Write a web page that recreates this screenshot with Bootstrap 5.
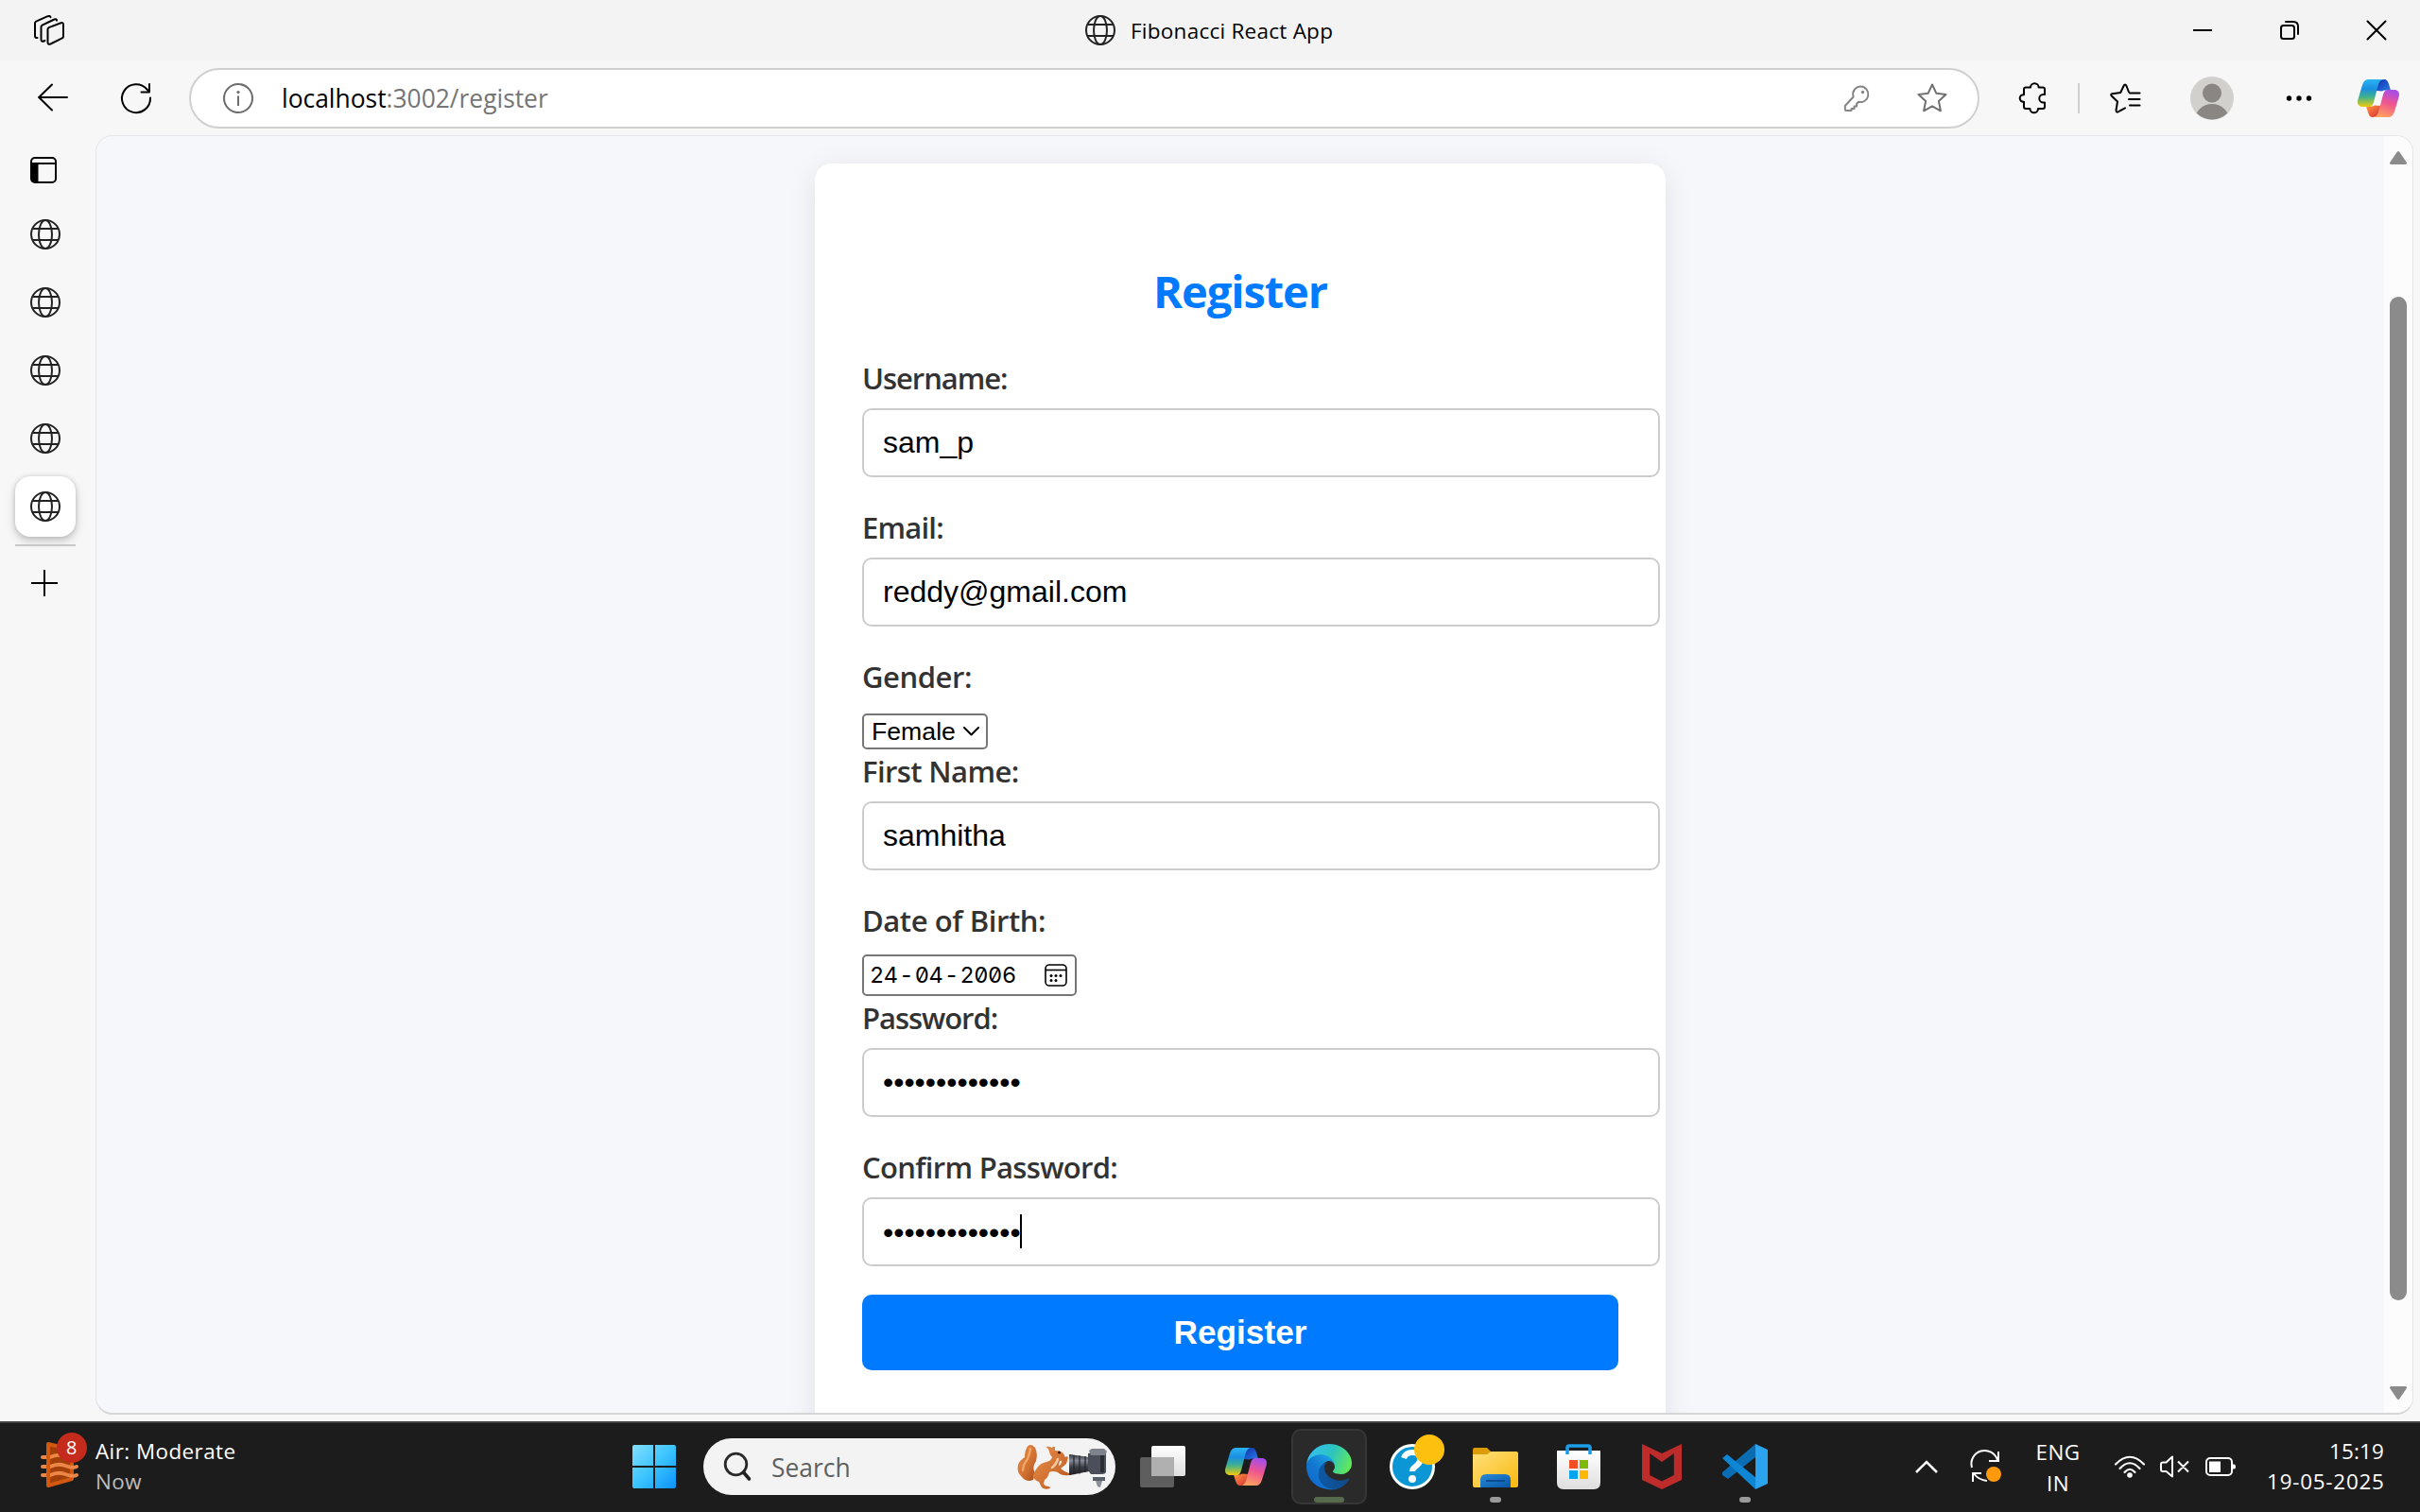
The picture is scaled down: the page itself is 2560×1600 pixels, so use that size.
<!DOCTYPE html>
<html lang="en">
<head>
<meta charset="utf-8">
<title>Fibonacci React App</title>
<link href="https://cdn.jsdelivr.net/npm/bootstrap@5.3.0/dist/css/bootstrap.min.css" rel="stylesheet">
<style>
body{width:2560px;height:1600px;overflow:hidden;background:#f7f7f7;font-family:"Open Sans","Noto Sans",sans-serif;color:#000}
svg{display:block;flex:none;overflow:visible}
.ln{fill:none;stroke:currentColor;stroke-width:2;stroke-linecap:round;stroke-linejoin:round}
.titlebar{height:64px;background:#f3f3f3;flex:none}
.title-text{font-size:22.5px;line-height:32px;padding-top:2px;margin-left:16px;letter-spacing:.25px;width:220px;white-space:nowrap}
.toolbar{height:79px;padding:1px 22px 0 40px;flex:none}
.address{width:1894px;height:64px;border:2px solid #d0d0d0;border-radius:32px;background:#fff;margin-left:40px;padding:0 32px 0 34px;color:#6b6b6b}
.url{font-size:26.4px;line-height:36px;margin-left:30px;white-space:nowrap}
.url b{font-weight:400;color:#000}
.url span{color:#757575}
.rail{width:101px;flex:none;padding:23px 0 0 16px;color:#222}
.tab-active{width:64px;height:64px;border-radius:16px;background:#fff;box-shadow:0 4px 10px rgba(0,0,0,.22),0 0 4px rgba(0,0,0,.12);margin-top:24px}
.rail-rule{width:64px;height:2px;background:#c8c8c8;margin-top:8px}
.viewport{width:2452px;height:1354px;border:2px solid #e4e5e9;border-top-width:1px;border-left-width:1px;border-right-width:1px;border-bottom-color:#d6d6d6;border-radius:18px;background:#f5f7fb;overflow:hidden;flex:none}
.stage{width:2420px;flex:none;padding:29px 0 0 760px}
.form-card{width:900px;height:1400px;background:#fff;border-radius:18px;box-shadow:0 6px 32px rgba(0,0,30,.085);padding:103px 50px 0}
.form-card h2{font-size:47px;line-height:64px;font-weight:700;color:#007bff;margin:0 0 39px;letter-spacing:-1.1px}
.form-card label{display:block;font-size:31px;line-height:43px;font-weight:600;color:#333;margin-bottom:10px;white-space:nowrap;letter-spacing:-.8px}
.form-card label:nth-of-type(1),.form-card label:nth-of-type(6){letter-spacing:-1.05px}
.form-card label:nth-of-type(3){letter-spacing:-.45px}
.form-card label:nth-of-type(4){letter-spacing:-.6px}
.form-card label:nth-of-type(5){letter-spacing:-.42px}
.form-card label:nth-of-type(7){letter-spacing:-.68px}
.entry{width:844px;height:73px;border:2px solid #ccc;border-radius:10px;padding:0 20px;font:32px/68px "Liberation Sans",Arial,sans-serif;color:#000;margin-bottom:32px;white-space:nowrap}
.pick{width:133px;height:38px;border:2px solid #767676;border-radius:5px;font:26.67px/34px "Liberation Sans",Arial,sans-serif;padding:0 7px 0 8px;margin:17px 0 2px}
.dob{width:227px;height:44px;border:2px solid #767676;border-radius:5px;padding:0 8px 0 6px;margin:14px 0 2px;font:23.5px/42px Inter,sans-serif;font-feature-settings:"tnum","zero";letter-spacing:-.4px}
.dob i{font-style:normal;display:inline-block;width:18px;text-align:center}
.caret{width:2px;height:36px;background:#000;margin:-1px 0 0 -1px}
.submit{width:800px;height:80px;border:0;border-radius:10px;background:#007bff;color:#fff;font:700 35.2px/80px "Liberation Sans",Arial,sans-serif;padding:0;margin-top:-2px}
.gutter{width:30px;background:#fcfcfc;flex:none;padding:16px 0 14px}
.thumb{width:18px;height:1062px;border-radius:9px;background:#8b8b8b;margin-top:140px}
.taskbar{height:96px;border-top:2px solid #404040;background:#1c1c1c;color:#fff;padding-bottom:2px;flex:none;font-size:22.4px;line-height:32.4px}
.weather{width:669px;padding-left:43px;letter-spacing:.45px}
.lang{width:50px;margin-left:35px;padding-top:3px;letter-spacing:.4px}
.clock{width:157px;letter-spacing:.2px}
.clock .day{letter-spacing:.78px;margin-right:-.7px}
.count{position:absolute;left:17px;top:-10px;width:32px;height:32px;border-radius:50%;background:#c42b1c;font-size:20px;line-height:32px;text-align:center}
.find{width:436px;height:60px;border-radius:30px;background:#f3f3f3;margin-left:29px;padding:0 7px 0 22px}
.find span{font-size:26.4px;line-height:40px;color:#5f5f5f;margin-left:22px;padding-top:1px}
.tile{width:80px;height:80px;border:2px solid #363636;border-radius:10px;background:#2a2a2a;margin-left:26px}
.pip{position:absolute;left:50%;bottom:-14px;width:12px;height:6px;margin-left:-6px;border-radius:3px;background:#9a9a9a}
.pip.on{width:32px;margin-left:-16px;background:#566b4b}
</style>
</head>
<body class="d-flex flex-column">
<svg width="0" height="0" style="position:absolute">
<defs>
<symbol id="globe" viewBox="0 0 32 32"><g fill="none" stroke="#222" stroke-width="2"><circle cx="16" cy="16" r="15"/><ellipse cx="16" cy="16" rx="7" ry="15"/><path d="M2.500 10h27M2.500 22h27"/></g></symbol>
<linearGradient id="ca" x1="0" y1="0" x2="0" y2="1"><stop offset="0" stop-color="#2bb3f3"/><stop offset=".35" stop-color="#1a8fe0"/><stop offset=".65" stop-color="#43b28a"/><stop offset="1" stop-color="#f0cb0a"/></linearGradient>
<linearGradient id="cb" x1="0" y1="0" x2="1" y2="1"><stop offset="0" stop-color="#0f2fa8"/><stop offset="1" stop-color="#2a7de8"/></linearGradient>
<linearGradient id="cc" x1=".6" y1="0" x2=".3" y2="1"><stop offset="0" stop-color="#a64ee8"/><stop offset=".45" stop-color="#f0558f"/><stop offset="1" stop-color="#ffa65c"/></linearGradient>
<linearGradient id="cd" x1="0" y1="0" x2="1" y2="1"><stop offset="0" stop-color="#ff9a3c"/><stop offset="1" stop-color="#d92c3a"/></linearGradient>
<symbol id="copilot" viewBox="0 0 44 40"><path d="M19.500 12L22 4Q23.500 0 28 0c3 0 4 2 5 5l2 6.500H29q-2 0-3 1z" fill="url(#cb)"/><path d="M24.500 28L22 36Q20.500 40 16 40c-3 0-4-2-5-5l-2-6.500H15q2 0 3-1z" fill="url(#cd)"/><path d="M12 0h16c-3 0-5 2-6 5l-5 19c-1 3-2 5-5 5H6c-5 0-7-3-5.500-8L5 6C6.500 2 8 0 12 0z" fill="url(#ca)"/><path d="M32 40H16c3 0 5-2 6-5l5-19c1-3 2-5 5-5h6c5 0 7 3 5.500 8L39 34c-1.500 4-3 6-7 6z" fill="url(#cc)"/></symbol>
<linearGradient id="wn" x1="0" y1="0" x2="1" y2="1"><stop offset="0" stop-color="#83deff"/><stop offset=".5" stop-color="#3cc4ff"/><stop offset="1" stop-color="#0a93fb"/></linearGradient>
<linearGradient id="e1" x1="0" y1=".5" x2="1" y2=".5"><stop offset="0" stop-color="#0c59a4"/><stop offset="1" stop-color="#114a8b"/></linearGradient>
<linearGradient id="e2" x1=".8" y1=".2" x2=".2" y2=".9"><stop offset="0" stop-color="#1b9de2"/><stop offset=".5" stop-color="#1477cf"/><stop offset="1" stop-color="#0e6cd0"/></linearGradient>
<linearGradient id="e3" x1="0" y1=".4" x2="1" y2=".7"><stop offset="0" stop-color="#35c1f1"/><stop offset=".5" stop-color="#2cc4bd"/><stop offset="1" stop-color="#66eb54"/></linearGradient>
<linearGradient id="fo" x1="0" y1="0" x2="1" y2="1"><stop offset="0" stop-color="#ffe17a"/><stop offset="1" stop-color="#f9b710"/></linearGradient>
<linearGradient id="fb" x1="0" y1="0" x2="1" y2="1"><stop offset="0" stop-color="#2b8ad8"/><stop offset="1" stop-color="#0657a6"/></linearGradient>
<linearGradient id="fur" x1="0" y1="0" x2="1" y2="1"><stop offset="0" stop-color="#e9924c"/><stop offset=".6" stop-color="#cf6f30"/><stop offset="1" stop-color="#a64c1c"/></linearGradient>
<linearGradient id="lens" x1="0" y1="0" x2="0" y2="1"><stop offset="0" stop-color="#343840"/><stop offset=".3" stop-color="#858b96"/><stop offset=".6" stop-color="#3d4048"/><stop offset="1" stop-color="#1d1f24"/></linearGradient>
</defs>
</svg>

<!-- Window title bar -->
<header class="titlebar d-flex align-items-center">
  <svg width="32" height="32" viewBox="0 0 32 32" style="margin-left:36px"><g class="ln"><path d="M14.500 15q0-1.300 1.200-1.900L28.500 8.300Q31 7.500 31 10v12.500q0 1.300-1.200 1.900L17.500 30.500Q14.500 31.500 14.500 29z"/><path d="M11.500 27Q7.500 29 7.500 26V12.500q0-1.300 1.200-1.900L21.500 4.500q2.500-.8 2.500 1.300"/><path d="M3.500 24Q1 24.300 1 22V8.500Q1 7.200 2.200 6.600L14.500 1.200Q17 .4 17.500 2.200"/></g></svg>
  <svg width="32" height="32" style="margin-left:1080px"><use href="#globe"/></svg>
  <div class="title-text">Fibonacci React App</div>
  <div class="d-flex align-items-center ms-auto" style="padding-right:36px;gap:72px">
    <svg width="20" height="20"><path d="M0 10h20" stroke="#000" stroke-width="2"/></svg>
    <svg width="20" height="20"><g class="ln"><rect x="1" y="5" width="14" height="14" rx="2.500"/><path d="M6 1h8q5 0 5 5v8"/></g></svg>
    <svg width="20" height="20"><path class="ln" d="M.5.500l19 19M19.500.500l-19 19"/></svg>
  </div>
</header>

<!-- Address toolbar -->
<nav class="toolbar d-flex align-items-center">
  <svg width="32" height="32"><path class="ln" d="M31 15H1M15 1.500L1.200 15L15 28.500"/></svg>
  <svg width="32" height="32" style="margin-left:56px"><path class="ln" d="M31 15.500A15 15 0 1 1 27.500 6.500L30 9M30 1v8.500h-8.500"/></svg>
  <div class="address d-flex align-items-center">
    <svg width="32" height="32"><circle cx="16" cy="16" r="15" class="ln"/><path d="M16 13.500v10.500" stroke="#6b6b6b" stroke-width="2"/><circle cx="16" cy="9.500" r="1.600" fill="#6b6b6b"/></svg>
    <div class="url"><span><b>localhost</b>:3002/register</span></div>
    <svg class="ms-auto" width="28" height="28" viewBox="0 0 28 28"><path d="M17.500 1.500a8.300 8.300 0 1 1-2.600 16.300L13 20v2.500h-2.500V25H7.500v2H2Q.8 27 .8 25.500V22L9.600 12.500A8.300 8.300 0 0 1 17.500 1.500z" fill="none" stroke="#858585" stroke-width="2" stroke-linejoin="round"/><circle cx="19.500" cy="7.500" r="1.700" fill="#858585"/></svg>
    <svg width="32" height="32" style="margin-left:49px"><path d="M16 1.500l4.300 9.200 10.200 1.300-7.600 7 2 10.300L16 24.300l-8.900 5 2-10.300-7.600-7 10.200-1.300z" fill="none" stroke="#707070" stroke-width="2" stroke-linejoin="round"/></svg>
  </div>
  <svg width="32" height="32" style="margin-left:42px"><path class="ln" d="M5 6.500q0-2 2-2h5a4.300 4.300 0 0 1 8.600 0H25q2 0 2 2V12h-1.500a4.200 4.200 0 0 0 0 8.500H27V25q0 2-2 2h-5a4.300 4.300 0 0 1-8.600 0H7q-2 0-2-2v-5.200H4.500a3.800 3.800 0 0 1 0-7.600H5z"/></svg>
  <div style="width:2px;height:32px;background:#d0d0d0;margin-left:30px"></div>
  <svg width="32" height="32" style="margin-left:32px"><g class="ln"><path d="M20 9.500L17.500 3q-1.500-3-3 0L11.200 10 2.500 11.200q-2.300.5-.7 2.300L8 19.500 6.500 28.500q0 3 2.500 1.700L16 26.300"/><path d="M21 10.500h10.500M20 17h11.500M21 23.500h10.500"/></g></svg>
  <svg width="46" height="46" style="margin-left:53px"><defs><clipPath id="av"><circle cx="23" cy="23" r="22.500"/></clipPath></defs><circle cx="23" cy="23" r="23" fill="#d2d0cd"/><g fill="#8a8683" clip-path="url(#av)"><circle cx="23" cy="17.500" r="10"/><ellipse cx="23" cy="46" rx="18" ry="17"/></g></svg>
  <svg width="32" height="32" style="margin-left:53px"><circle cx="5.500" cy="16" r="2.700"/><circle cx="16" cy="16" r="2.700"/><circle cx="26.500" cy="16" r="2.700"/></svg>
  <svg width="44" height="40" style="margin-left:46px"><use href="#copilot"/></svg>
</nav>

<div class="d-flex flex-grow-1" style="min-height:0">
  <!-- Vertical tab rail -->
  <aside class="rail">
    <svg width="28" height="28" style="margin:0 0 38px 16px"><rect x="1" y="1" width="26" height="26" rx="4" fill="none" stroke="#000" stroke-width="2"/><path d="M1 7h26" stroke="#000" stroke-width="2"/><path d="M1 7h7.500v20H4q-3 0-3-3z"/></svg>
    <div class="d-flex flex-column" style="gap:40px;padding-left:16px">
      <svg width="32" height="32"><use href="#globe"/></svg>
      <svg width="32" height="32"><use href="#globe"/></svg>
      <svg width="32" height="32"><use href="#globe"/></svg>
      <svg width="32" height="32"><use href="#globe"/></svg>
    </div>
    <div class="tab-active d-flex align-items-center justify-content-center"><svg width="32" height="32"><use href="#globe"/></svg></div>
    <div class="rail-rule"></div>
    <svg width="28" height="28" style="margin:25px 0 0 17px"><path d="M0 14h28M14 0v28" stroke="#000" stroke-width="2"/></svg>
  </aside>

  <main class="viewport d-flex">
    <div class="stage">
      <form class="form-card">
        <h2 class="text-center">Register</h2>
        <label>Username:</label>
        <div class="entry">sam_p</div>
        <label>Email:</label>
        <div class="entry">reddy@gmail.com</div>
        <label class="mb-0">Gender:</label>
        <div class="pick d-flex align-items-center justify-content-between"><span>Female</span><svg width="17" height="10"><path class="ln" d="M1 1l7.500 7.500L16 1"/></svg></div>
        <label>First Name:</label>
        <div class="entry">samhitha</div>
        <label class="mb-0">Date of Birth:</label>
        <div class="dob d-flex align-items-center justify-content-between"><span>24<i>-</i>04<i>-</i>2006</span><svg width="24" height="24"><rect x="1" y="1" width="22" height="22" rx="4" fill="none" stroke="#000" stroke-width="1.600"/><path d="M1 6.500h22" stroke="#000" stroke-width="1.600"/><g><circle cx="7" cy="12.500" r="1.500"/><circle cx="12" cy="12.500" r="1.500"/><circle cx="17" cy="12.500" r="1.500"/><circle cx="7" cy="17.500" r="1.500"/><circle cx="12" cy="17.500" r="1.500"/></g></svg></div>
        <label>Password:</label>
        <div class="entry">•••••••••••••</div>
        <label>Confirm Password:</label>
        <div class="entry d-flex align-items-center"><span>•••••••••••••</span><span class="caret"></span></div>
        <button type="button" class="submit d-block">Register</button>
      </form>
    </div>
    <div class="gutter d-flex flex-column align-items-center">
      <svg width="18" height="14"><path d="M9 1.500L16.500 12.500h-15z" fill="#8b8b8b" stroke="#8b8b8b" stroke-width="3" stroke-linejoin="round"/></svg>
      <div class="thumb"></div>
      <svg width="18" height="14" class="mt-auto"><path d="M9 12.500L16.500 1.500h-15z" fill="#8b8b8b" stroke="#8b8b8b" stroke-width="3" stroke-linejoin="round"/></svg>
    </div>
  </main>
</div>

<!-- Taskbar -->
<footer class="taskbar d-flex align-items-center">
  <div class="weather d-flex align-items-center flex-shrink-0">
    <div class="position-relative" style="top:-2px">
      <svg width="40" height="48"><path d="M8 2L33 8V39L8 46z" fill="#a33f08" stroke="#d2590f" stroke-width="4" stroke-linejoin="round"/><path d="M2 16h8q8-4 16-1t12 1M2 26h8q8-4 16-1t12 1M2 35h8q8-4 16-1t12 1" fill="none" stroke="#ec8647" stroke-width="4" stroke-linecap="round"/><path d="M8 2V46" stroke="#d2590f" stroke-width="4"/></svg>
      <span class="count">8</span>
    </div>
    <div style="margin-left:18px"><div>Air: Moderate</div><div style="color:#bdbdbd">Now</div></div>
  </div>
  <svg width="46" height="46"><g fill="url(#wn)"><path d="M0 2q0-2 2-2h20v22H0zM24 0h20q2 0 2 2v20H24zM0 24h22v22H2q-2 0-2-2zM24 24h22v20q0 2-2 2H24z"/></g></svg>
  <div class="find d-flex align-items-center flex-shrink-0">
    <svg width="28" height="30"><circle cx="12.500" cy="12.500" r="11.300" fill="none" stroke="#2a2a2a" stroke-width="2.800"/><path d="M20.500 21l6 7" stroke="#222" stroke-width="3.600" stroke-linecap="round"/></svg>
    <span>Search</span>
    <svg class="ms-auto" width="97" height="48">
      <path d="M11 2.500Q15-1 19 4q3 6 1 14-4 6-2 11 1 4-1 9-7 3-12-3Q-1 30 1 22q1-4 7-8 0-7 3-11.500z" fill="url(#fur)"/><path d="M14 5q-1 6-3 11-5 6-5 12" fill="none" stroke="#f0a566" stroke-width="2.500" stroke-linecap="round"/>
      <path d="M17 35q0-5 3-8 4-7 11-8 5-1 6-5-3-3-3-6-1-4-4-5 4-1 7 1 1-2 3-1v4q8 0 10 5l1 3q-2 3-6 3l-1 5q3-1 3-5l5-5 2 1-2 7-6 5q3 3 9 5v2q-8 1-12-3-6-2-9 0-1 5-5 8l-1 4q1 3 6 3l1 2q-6 2-9-1l-3-6q-4-1-6-5z" fill="url(#fur)"/><path d="M43 16q-2 6-6 9" stroke="#f0c9a0" stroke-width="2.500" fill="none" stroke-linecap="round"/><circle cx="44.500" cy="9" r="1.500" fill="#2b1408"/>
      <path d="M55 12q-1-1 1-1l20 3v15l-20 4q-2 0-1-1z" fill="url(#lens)"/><path d="M60 12v20M66 12.500v19M72 13v17" stroke="#25272d" stroke-width="1.300"/>
      <path d="M75 10q10-3 19 0v20q-1 2-4 2H78l-3-4z" fill="#4b4f59"/><path d="M76 7l3-2h13l3 3-2 4H78z" fill="#7d828c"/><path d="M90 12v18" stroke="#2a2c33" stroke-width="4"/><path d="M80 35h13v4H80z" fill="#5c606a"/><path d="M83 39h7l-2 7-3-1z" fill="#8c9099"/>
    </svg>
  </div>
  <svg width="48" height="44" style="margin-left:26px"><defs><linearGradient id="tv" x1="0" y1="0" x2="0" y2="1"><stop offset="0" stop-color="#fff"/><stop offset="1" stop-color="#dedede"/></linearGradient></defs><rect x="12" width="36" height="32" rx="2" fill="url(#tv)"/><rect y="12" width="36" height="32" rx="2" fill="#5e5e5e"/><path d="M12 12h24v20H12z" fill="#b0b0b0"/></svg>
  <svg width="44" height="40" style="margin-left:42px"><use href="#copilot"/></svg>
  <div class="tile d-flex align-items-center justify-content-center flex-shrink-0">
    <div class="position-relative"><svg width="48" height="48" viewBox="0 0 256 256"><path fill="url(#e1)" d="M235.680 195.460a93.730 93.730 0 0 1-10.540 4.710 101.870 101.870 0 0 1-35.900 6.460c-47.320 0-88.540-32.550-88.540-74.320a31.480 31.480 0 0 1 16.430-27.310c-42.800 1.800-53.800 46.400-53.800 72.530 0 73.880 68.090 81.370 82.760 81.370 7.910 0 19.840-2.300 27-4.560l1.310-.44a128.340 128.340 0 0 0 66.600-52.800 4 4 0 0 0-5.320-5.640z"/><path fill="url(#e2)" d="M105.730 241.420a79.200 79.200 0 0 1-22.740-21.340 80.720 80.720 0 0 1 29.530-120c3.120-1.470 8.450-4.130 15.540-4a32.350 32.350 0 0 1 25.690 13 31.880 31.880 0 0 1 6.360 18.660c0-.21 24.460-79.600-80-79.600-43.900 0-80 41.660-80 78.210a130.150 130.150 0 0 0 12.110 56 128 128 0 0 0 156.380 67.110 75.550 75.550 0 0 1-62.780-8z"/><path fill="url(#e3)" d="M152.330 148.860c-.81 1.050-3.300 2.500-3.300 5.660 0 2.610 1.700 5.120 4.720 7.230 14.380 10 41.490 8.680 41.560 8.680a59.560 59.560 0 0 0 30.270-8.350 61.380 61.380 0 0 0 30.430-52.880c.26-22.410-8-37.310-11.340-43.910C223.460 23.840 177.720 0 128 0A128 128 0 0 0 0 126.200c.48-36.540 36.800-66.050 80-66.050 3.500 0 23.460.34 42 10.070 16.340 8.580 24.900 18.940 30.850 29.210 6.180 10.670 7.280 24.150 7.280 29.520s-2.740 13.330-7.800 19.910z"/></svg><span class="pip on"></span></div>
  </div>
  <svg width="48" height="48" style="margin-left:24px"><circle cx="24" cy="24" r="22.500" fill="#0b97d6" stroke="#fff" stroke-width="3"/><path d="M15 15q2-6 9-6 8.500 0 8.500 7 0 4-4 7-4.500 3-4.500 6" fill="none" stroke="#fff" stroke-width="6"/><circle cx="24" cy="37" r="4" fill="#fff"/><circle cx="42" cy="6" r="16" fill="#fec00f"/></svg>
  <div class="position-relative" style="margin-left:40px"><svg width="48" height="48"><path d="M0 6q0-2 2-2h13l5 5v6H0z" fill="#dc9c0a"/><path d="M0 11h15l4-3h27q2 0 2 2v34q0 2-2 2H2q-2 0-2-2z" fill="url(#fo)"/><path d="M8 46V38q0-6 6-6h20q6 0 6 6v8z" fill="url(#fb)"/><path d="M14 39h20" stroke="#0a4c90" stroke-width="2"/></svg><span class="pip"></span></div>
  <svg width="46" height="48" style="margin-left:41px"><defs><linearGradient id="st" x1="0" y1="0" x2="0" y2="1"><stop offset="0" stop-color="#fff"/><stop offset="1" stop-color="#dedede"/></linearGradient></defs><path d="M0 7h46v34q0 7-7 7H7q-7 0-7-7z" fill="url(#st)"/><path d="M11 11V4q0-2 2-2h20q2 0 2 2v7" fill="none" stroke="#1b9de8" stroke-width="3.600"/><path d="M13 17h9v9h-9z" fill="#f25022"/><path d="M24 17h9v9h-9z" fill="#7fba00"/><path d="M13 28h9v9h-9z" fill="#00a4ef"/><path d="M24 28h9v9h-9z" fill="#ffb900"/></svg>
  <svg width="42" height="48" style="margin-left:44px"><path fill="#bd2b2b" fill-rule="evenodd" d="M0 0l21 10L42 0v38L21 48 0 38zM8.200 10v23L21 39.500 33.800 33V10L21 19z"/></svg>
  <div class="position-relative" style="margin-left:43px"><svg width="48" height="48"><path d="M35 0v14L6 37 0 33v-3z" fill="#0a6db3"/><path d="M0 15l5-4 31 25-1 12z" fill="#0e86d4"/><path d="M35 0l13 6v36l-13 6z" fill="#2ba3ef"/></svg><span class="pip"></span></div>

  <div class="d-flex align-items-center ms-auto" style="padding-right:38px">
    <svg width="24" height="14"><path d="M1 13L12 2l11 11" fill="none" stroke="#fff" stroke-width="2.600"/></svg>
    <svg width="32" height="32" style="margin-left:35px"><g fill="none" stroke="#fff" stroke-width="2"><path d="M1 17A14 14 0 0 1 28 9M29 0v10h-10M17 31Q8 30 3 23.500M2 32V23h9"/></g><circle cx="24" cy="24" r="8" fill="#ff9a0c"/></svg>
    <div class="lang text-center"><div>ENG</div><div>IN</div></div>
    <svg width="32" height="24" style="margin-left:35px"><g fill="none" stroke="#fff" stroke-width="2.200" stroke-linecap="round"><path d="M1 9.500Q16-6 31 9.500M5.500 14Q16 2.500 26.500 14M10.500 18Q16 11.500 21.500 18"/></g><circle cx="16" cy="21" r="2.800" fill="#fff"/></svg>
    <svg width="32" height="24" style="margin-left:16px"><path d="M13 1.500v21L6.500 17H3q-2 0-2-2V9.500q0-2 2-2h3.500zM19 6.500l11 11M30 6.500l-11 11" fill="none" stroke="#fff" stroke-width="2" stroke-linejoin="round"/></svg>
    <svg width="32" height="20" style="margin-left:16px"><rect x="1" y="1" width="27" height="18" rx="4" fill="none" stroke="#fff" stroke-width="2"/><path d="M4 4.500h12v11.500H4zM29 7.500h1.500q1.500 0 1.500 2.500t-1.500 2.500H29z" fill="#fff"/></svg>
    <div class="clock text-end"><div>15:19</div><div class="day">19-05-2025</div></div>
  </div>
</footer>
<script src="https://cdn.jsdelivr.net/npm/bootstrap@5.3.0/dist/js/bootstrap.bundle.min.js"></script>
</body>
</html>
